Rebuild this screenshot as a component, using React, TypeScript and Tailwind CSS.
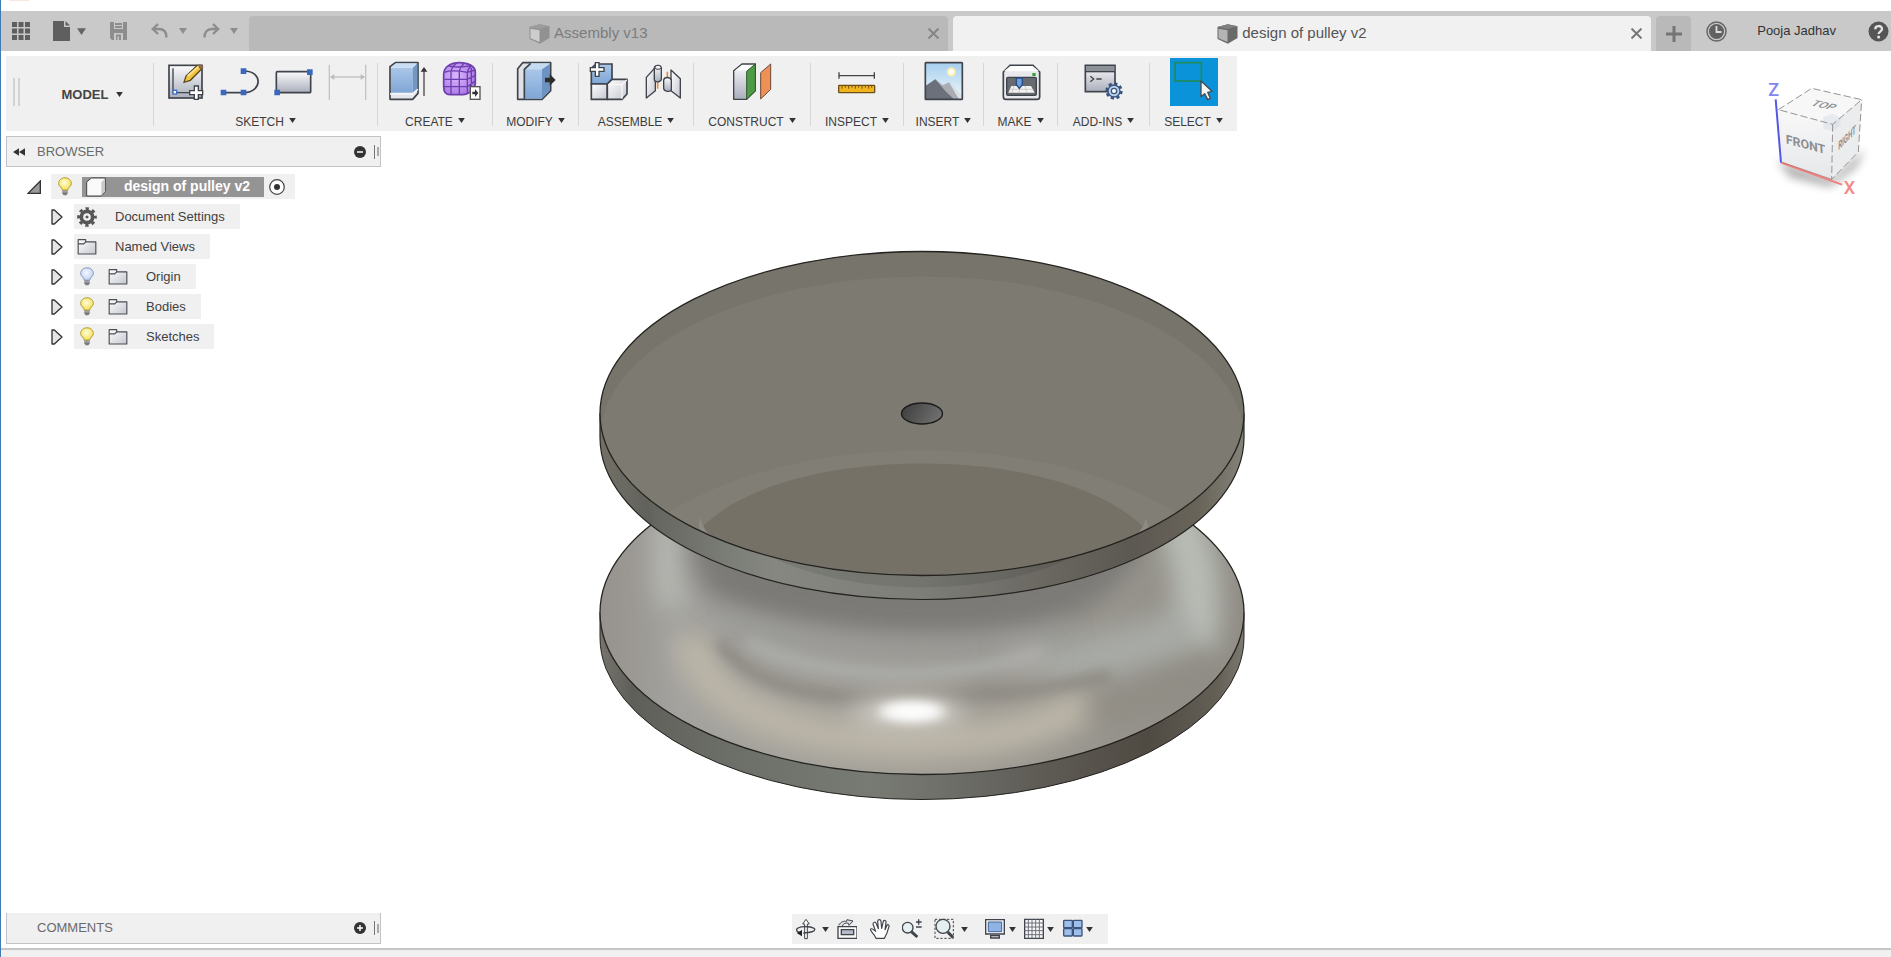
import type { ReactNode } from "react";

const INK = "#3f434b";

function Caret({ className = "w-[7px] h-[5px] fill-[#333]" }: { className?: string }) {
  return (
    <svg viewBox="0 0 8 6" className={className} aria-hidden="true">
      <path d="M0 0H8L4 6Z" />
    </svg>
  );
}

/* Gradients shared by every icon on the page. */
function SharedDefs() {
  return (
    <svg className="absolute size-0" aria-hidden="true">
      <defs>
        <linearGradient id="steel" x1="0" y1="0" x2="0" y2="1">
          <stop offset="0" stopColor="#fbfbfc" />
          <stop offset="1" stopColor="#a9aebb" />
        </linearGradient>
        <linearGradient id="steelSoft" x1="0" y1="0" x2="1" y2="1">
          <stop offset="0" stopColor="#ffffff" />
          <stop offset="1" stopColor="#c4c7cf" />
        </linearGradient>
        <linearGradient id="blue" x1="0" y1="0" x2="0" y2="1">
          <stop offset="0" stopColor="#a9c6e8" />
          <stop offset="1" stopColor="#7fa6d6" />
        </linearGradient>
        <linearGradient id="sky" x1="0" y1="0" x2="0" y2="1">
          <stop offset="0" stopColor="#a6cfee" />
          <stop offset="1" stopColor="#eef7fb" />
        </linearGradient>
        <radialGradient id="bulbOn" cx=".45" cy=".4" r=".6">
          <stop offset="0" stopColor="#fffde0" />
          <stop offset="1" stopColor="#f5df4d" />
        </radialGradient>
        <radialGradient id="bulbOff" cx=".45" cy=".4" r=".6">
          <stop offset="0" stopColor="#f4f8ff" />
          <stop offset="1" stopColor="#bfd2f5" />
        </radialGradient>
        <radialGradient id="purple" cx=".4" cy=".4" r=".7">
          <stop offset="0" stopColor="#d9b6fb" />
          <stop offset="1" stopColor="#a673e4" />
        </radialGradient>
      </defs>
    </svg>
  );
}

function ToolIcon({ x, children }: { x: number; children: ReactNode }) {
  return (
    <svg viewBox={`${x} 174 144 144`} className="size-12" fill="none" aria-hidden="true">
      {children}
    </svg>
  );
}

const icons = {
  sketch: (
    <ToolIcon x={483}>
      <rect x="507" y="196" width="99" height="98" fill="url(#steel)" stroke={INK} strokeWidth="5" />
      <path d="M519 205V278H580" stroke={INK} strokeWidth="4" />
      <rect x="519" y="271" width="11" height="11" fill="#fff" stroke="#3f6fc4" strokeWidth="4" />
      <path d="M552 247L558 228L592 196L605 207L571 241Z" fill="#f2c53a" stroke="#5d4a20" strokeWidth="4" />
      <path d="M563 228L596 199" stroke="#fbe69a" strokeWidth="5" />
      <path d="M592 196L605 207L611 201L600 192Z" fill="#8b6d4a" />
      <path d="M583 258H595V272H608V284H595V298H583V284H569V272H583Z" fill="#fff" stroke={INK} strokeWidth="4" />
    </ToolIcon>
  ),
  line: (
    <ToolIcon x={645}>
      <path d="M670 278H732C787 276 790 214 732 213" stroke={INK} strokeWidth="5" />
      <path d="M662 269H679V286H662ZM722 269H739V286H722ZM722 205H739V222H722Z" fill="#3b68bf" />
    </ToolIcon>
  ),
  rect: (
    <ToolIcon x={807}>
      <rect x="829" y="215" width="103" height="63" rx="3" fill="url(#steel)" stroke={INK} strokeWidth="5" />
      <path d="M921 208H938V225H921ZM823 269H840V286H823Z" fill="#3b68bf" />
    </ToolIcon>
  ),
  dimension: (
    <ToolIcon x={969}>
      <path d="M988 194V300M1097 194V300M992 231H1093" stroke="#c3c3c3" strokeWidth="4" />
      <path d="M990 231L1003 222V240ZM1095 231L1082 222V240Z" fill="#bdbdbd" />
    </ToolIcon>
  ),
  extrude: (
    <ToolIcon x={12}>
      <path d="M30 200L46 188H114V280L98 298H30Z" fill="#e3e5ea" stroke={INK} strokeWidth="5" strokeLinejoin="round" />
      <path d="M33 204H98V278H33Z" fill="url(#blue)" />
      <path d="M98 204L112 190V266L98 278Z" fill="#7197c6" />
      <path d="M34 203L48 190H111L98 203Z" fill="#c9def4" />
      <path d="M30 282H98L114 268" stroke="#f7f8fa" strokeWidth="4" />
      <path d="M132 288V210" stroke="#4a4a4a" strokeWidth="4" />
      <path d="M132 201L142 215H122Z" fill="#333" />
    </ToolIcon>
  ),
  form: (
    <ToolIcon x={174}>
      <path
        d="M191 222C192 200 212 188 238 188C266 188 286 200 286 216V250C284 268 268 284 248 284H210C196 284 191 274 191 260Z"
        fill="url(#purple)"
        stroke="#6d3fae"
        strokeWidth="5"
      />
      <path
        d="M193 217C210 211 240 213 262 217L286 210M193 238H262L286 226M192 260H262L285 244M213 284V214C214 204 222 196 230 189M238 284V214C240 204 246 196 252 190M262 280V217C264 206 270 200 276 196M206 198C226 202 252 202 274 196M274 268V204"
        stroke="#6d3fae"
        strokeWidth="4"
      />
      <rect x="271" y="260" width="29" height="38" fill="#fff" stroke="#555" strokeWidth="4" />
      <path d="M277 275H285V267L295 279L285 291V283H277Z" fill="#333" />
    </ToolIcon>
  ),
  pressPull: (
    <ToolIcon x={396}>
      <path d="M413 206L428 188H512V272L486 298H413Z" fill="#dfe1e6" stroke={INK} strokeWidth="5" strokeLinejoin="round" />
      <path d="M433 208H486V296H433Z" fill="url(#blue)" />
      <path d="M433 207L452 190H510L486 207Z" fill="#c3dbf3" />
      <path d="M486 208L510 191V271L486 296Z" fill="#6d93c3" />
      <path d="M433 297V208L452 190" stroke={INK} strokeWidth="5" />
      <path d="M495 233H509V222L527 240L509 257V247H495Z" fill="#2d2d2d" />
    </ToolIcon>
  ),
  component: (
    <ToolIcon x={615}>
      <path d="M634 205L648 192H696V238L682 252H634Z" fill="url(#blue)" stroke={INK} strokeWidth="5" />
      <path d="M634 252H682V298H634Z" fill="url(#steelSoft)" stroke={INK} strokeWidth="5" />
      <path d="M682 252L696 238H741V282L726 298H682Z" fill="url(#steelSoft)" stroke={INK} strokeWidth="5" strokeLinejoin="round" />
      <path d="M684 254H726V296M726 254L740 240" stroke="#f7f7f7" strokeWidth="4" />
      <path d="M646 188H657V203H672V214H657V229H646V214H631V203H646Z" fill="#fff" stroke={INK} strokeWidth="4" />
    </ToolIcon>
  ),
  joint: (
    <ToolIcon x={777}>
      <path d="M833 246V266M862 215V240" stroke="#ee8a3c" strokeWidth="5" />
      <path d="M799 232L826 202V272L817 280L799 294Z" fill="url(#steelSoft)" stroke={INK} strokeWidth="4" strokeLinejoin="round" />
      <path d="M823 204C825 194 842 194 844 204V238C842 247 825 248 823 240Z" fill="url(#steel)" stroke={INK} strokeWidth="4" />
      <ellipse cx="834" cy="202" rx="9" ry="6" fill="#f4f4f5" stroke={INK} strokeWidth="3" />
      <path d="M873 210L901 236V294L873 272Z" fill="url(#steelSoft)" stroke={INK} strokeWidth="4" strokeLinejoin="round" />
      <path d="M851 240C853 230 870 230 874 240V270C871 276 853 276 851 266Z" fill="url(#steel)" stroke={INK} strokeWidth="4" />
    </ToolIcon>
  ),
  plane: (
    <ToolIcon x={1044}>
      <path d="M1061 212L1086 192H1126V272L1100 298H1061Z" fill="url(#steel)" stroke={INK} strokeWidth="4" strokeLinejoin="round" />
      <path d="M1066 211L1087 195H1120L1099 211Z" fill="#fdfdfd" />
      <path d="M1100 214L1126 192V272L1100 298Z" fill="#4f9a45" stroke="#2f5a2c" strokeWidth="3" />
      <path d="M1142 218L1172 192V268L1142 297Z" fill="#ee9158" stroke="#6d4a38" strokeWidth="3" />
    </ToolIcon>
  ),
  measure: (
    <ToolIcon x={159}>
      <path d="M177 217V236M283 217V236M177 227H283" stroke="#444" strokeWidth="4" />
      <rect x="176" y="256" width="108" height="22" rx="2" fill="#f0b51e" stroke="#6d5018" strokeWidth="4" />
      <path d="M186 257V266M196 257V263M206 257V266M216 257V263M226 257V266M236 257V263M246 257V266M256 257V263M266 257V266M275 257V263" stroke="#6d5018" strokeWidth="3" />
    </ToolIcon>
  ),
  insert: (
    <ToolIcon x={418}>
      <rect x="434" y="188" width="111" height="110" fill="url(#sky)" />
      <circle cx="512" cy="216" r="14" fill="#f8ecae" />
      <circle cx="512" cy="216" r="8" fill="#fff" />
      <path d="M434 260L464 238L486 256L505 247L545 290V298H434Z" fill="#a9adb3" />
      <path d="M434 258L464 238L496 275L520 298H434Z" fill="#6b707a" />
      <path d="M505 247L545 290V298H535Z" fill="#dfe3e6" />
      <rect x="434" y="188" width="111" height="110" rx="2" stroke={INK} strokeWidth="5" />
    </ToolIcon>
  ),
  make: (
    <ToolIcon x={649}>
      <path d="M668 216L688 196H757L777 216V290Q777 298 769 298H676Q668 298 668 290Z" fill="#e8e9ec" stroke={INK} strokeWidth="5" />
      <path d="M670 214L689 198H756L775 214Z" fill="#fcfcfd" />
      <rect x="678" y="232" width="89" height="54" rx="4" fill="#676a70" stroke={INK} strokeWidth="4" />
      <path d="M692 258H751L762 278H683Z" fill="#f2f2f2" />
      <path d="M716 258V278M733 258L738 278M700 258L694 278M686 268H758" stroke="#b9b9b9" strokeWidth="2" />
      <path d="M707 234H725V254L716 265L707 254Z" fill="#6f9edb" stroke="#254c85" strokeWidth="4" />
      <rect x="755" y="219" width="10" height="9" fill="#38a336" />
    </ToolIcon>
  ),
  addins: (
    <ToolIcon x={898}>
      <rect x="914" y="196" width="89" height="79" fill="url(#steel)" stroke={INK} strokeWidth="5" />
      <path d="M916 198H1001V213H916Z" fill="#8c9097" />
      <path d="M914 215H1003" stroke={INK} strokeWidth="4" />
      <path d="M929 229L939 237L929 245M947 237H963" stroke="#444" strokeWidth="4" />
      <circle cx="1000" cy="273" r="21" stroke="#38557f" strokeWidth="10" strokeDasharray="9 7.5" />
      <circle cx="1000" cy="273" r="18" fill="#b9cfee" stroke="#38557f" strokeWidth="4" />
      <circle cx="1000" cy="273" r="8" fill="#fff" stroke="#38557f" strokeWidth="4" />
    </ToolIcon>
  ),
  select: (
    <ToolIcon x={1168}>
      <rect x="1183" y="188" width="79" height="55" stroke="#1f8a5b" strokeWidth="5" />
      <path d="M1261 243V290L1272 281L1281 299L1289 295L1281 277L1294 274Z" fill="#f7f7f7" stroke="#444b55" strokeWidth="4" strokeLinejoin="round" />
    </ToolIcon>
  ),
};

type Tool = { name: string; icon: ReactNode; active?: boolean };

function Group({ label, width, tools }: { label: string; width: string; tools: Tool[] }) {
  return (
    <section className={`flex shrink-0 flex-col items-center gap-2 ${width}`}>
      <div className="flex">
        {tools.map((t) => (
          <button
            key={t.name}
            aria-label={t.name}
            className={`flex justify-center ${t.active ? "w-12 bg-[#0a93d8]" : "w-[54px]"}`}
          >
            {t.icon}
          </button>
        ))}
      </div>
      <button className="flex items-center gap-[5px] text-[12px] leading-4">
        {label}
        <Caret className="mb-1 h-[5px] w-[7px] fill-[#333]" />
      </button>
    </section>
  );
}

function Divider() {
  return <div className="my-[5px] w-px shrink-0 bg-[#d6d6d6]" />;
}

function Toolbar() {
  return (
    <div role="toolbar" className="ml-[5px] flex h-[75px] w-fit bg-[#f0f0f0] pt-[2px] text-[#3c3c3c]">
      <div className="mt-5 ml-[7px] h-7 w-[7px] border-x-2 border-[#d2d2d2]" />
      <button className="flex w-[133px] items-center justify-center gap-2 pl-3 text-[13px] font-bold text-[#444]">
        MODEL
        <Caret />
      </button>
      <Divider />
      <Group
        label="SKETCH"
        width="w-[223px]"
        tools={[
          { name: "Create Sketch", icon: icons.sketch },
          { name: "Line", icon: icons.line },
          { name: "Rectangle", icon: icons.rect },
          { name: "Sketch Dimension", icon: icons.dimension },
        ]}
      />
      <Divider />
      <Group
        label="CREATE"
        width="w-[114px]"
        tools={[
          { name: "Extrude", icon: icons.extrude },
          { name: "Create Form", icon: icons.form },
        ]}
      />
      <Divider />
      <Group label="MODIFY" width="w-[85px]" tools={[{ name: "Press Pull", icon: icons.pressPull }]} />
      <Divider />
      <Group
        label="ASSEMBLE"
        width="w-[114px]"
        tools={[
          { name: "New Component", icon: icons.component },
          { name: "Joint", icon: icons.joint },
        ]}
      />
      <Divider />
      <Group label="CONSTRUCT" width="w-[116px]" tools={[{ name: "Offset Plane", icon: icons.plane }]} />
      <Divider />
      <Group label="INSPECT" width="w-[92px]" tools={[{ name: "Measure", icon: icons.measure }]} />
      <Divider />
      <Group label="INSERT" width="w-[79px]" tools={[{ name: "Insert Image", icon: icons.insert }]} />
      <Divider />
      <Group label="MAKE" width="w-[73px]" tools={[{ name: "3D Print", icon: icons.make }]} />
      <Divider />
      <Group label="ADD-INS" width="w-[91px]" tools={[{ name: "Scripts", icon: icons.addins }]} />
      <Divider />
      <Group label="SELECT" width="w-[87px]" tools={[{ name: "Select", icon: icons.select, active: true }]} />
    </div>
  );
}

function DocCube({ dim }: { dim?: boolean }) {
  return (
    <svg viewBox="0 0 62 60" className={`h-5 w-[21px] ${dim ? "opacity-50" : ""}`} aria-hidden="true">
      <path d="M1 9L32 1L61 7V42L32 59L1 45Z" fill="#6a6a6a" />
      <path d="M4 14L31 19V54L4 43Z" fill={dim ? "#e2e2e2" : "#b4b4b4"} />
      <path d="M1 9L32 1L61 7L32 15Z" fill="#808080" />
    </svg>
  );
}

function Tab({ title, active }: { title: string; active?: boolean }) {
  return (
    <div
      className={`flex flex-1 items-center rounded-t-[4px] pr-[9px] ${
        active ? "bg-[#f1f1f1] text-[#555]" : "bg-[#b9b9b9] text-[#7c7c7c]"
      }`}
    >
      <button role="tab" aria-selected={!!active} className="flex flex-1 items-center justify-center gap-1 text-[15px]">
        <DocCube dim={!active} />
        {title}
      </button>
      <button aria-label={`Close ${title}`}>
        <svg viewBox="0 0 10 10" className="size-[11px]" stroke={active ? "#777" : "#858585"} strokeWidth="1.8" aria-hidden="true">
          <path d="M.5 .5L9.5 9.5M9.5 .5L.5 9.5" />
        </svg>
      </button>
    </div>
  );
}

function TabBar() {
  return (
    <header className="flex h-10 bg-[#c9c9c9] pt-[5px]">
      <nav className="flex w-[248px] shrink-0 items-center pb-[5px] pl-[11px]">
        <button aria-label="Data panel" className="mr-[23px]">
          <svg viewBox="0 0 18 18" className="size-[18px] fill-[#5f5f5f]" aria-hidden="true">
            <path d="M0 0H5V5H0ZM6.500 0H11.500V5H6.500ZM13 0H18V5H13ZM0 6.500H5V11.500H0ZM6.500 6.500H11.500V11.500H6.500ZM13 6.500H18V11.500H13ZM0 13H5V18H0ZM6.500 13H11.500V18H6.500ZM13 13H18V18H13Z" />
          </svg>
        </button>
        <button aria-label="File" className="mr-6 flex items-center gap-[7px]">
          <svg viewBox="0 0 17 20" className="h-5 w-[17px] fill-[#5f5f5f]" aria-hidden="true">
            <path d="M0 0H11V6H17V20H0ZM12.500 0L17 4.500H12.500Z" />
          </svg>
          <Caret className="h-[7px] w-[9px] fill-[#666]" />
        </button>
        <button aria-label="Save" className="mr-6">
          <svg viewBox="0 0 17 18" className="h-[18px] w-[17px]" aria-hidden="true">
            <path d="M0 0H17V18H2L0 16Z" fill="#8d8d8d" />
            <path d="M4 0H13V7H4ZM4 11H13V18H4Z" fill="#c9c9c9" />
            <path d="M5 1H12V3H5ZM5 4H12V6H5ZM6 12.500H11V18H9V14.500H7.500V18H6Z" fill="#8d8d8d" />
          </svg>
        </button>
        <button aria-label="Undo" className="mr-4 flex items-center gap-[11px]">
          <svg viewBox="0 0 17 16" className="h-4 w-[17px]" fill="none" stroke="#8d8d8d" strokeWidth="2.4" aria-hidden="true">
            <path d="M7 1L1.800 6L7 11M2 6H8C13 6 15.500 9 15.500 14.500" />
          </svg>
          <Caret className="h-[6px] w-2 fill-[#8d8d8d]" />
        </button>
        <button aria-label="Redo" className="flex items-center gap-[10px]">
          <svg viewBox="0 0 17 16" className="h-4 w-[17px]" fill="none" stroke="#8d8d8d" strokeWidth="2.4" aria-hidden="true">
            <path d="M10 1L15.200 6L10 11M15 6H9C4 6 1.500 9 1.500 14.500" />
          </svg>
          <Caret className="h-[6px] w-2 fill-[#8d8d8d]" />
        </button>
      </nav>
      <div role="tablist" className="flex flex-1 gap-[5px]">
        <Tab title="Assembly v13" />
        <Tab title="design of pulley v2" active />
      </div>
      <button aria-label="New tab" className="ml-[5px] flex w-[35px] items-center justify-center rounded-t-[4px] bg-[#b9b9b9]">
        <svg viewBox="0 0 16 16" className="size-4" stroke="#757575" strokeWidth="3" aria-hidden="true">
          <path d="M8 0V16M0 8H16" />
        </svg>
      </button>
      <div className="flex shrink-0 items-center pr-[2px] pb-[5px] pl-[15px]">
        <button aria-label="Job status">
          <svg viewBox="0 0 21 21" className="size-[21px]" aria-hidden="true">
            <circle cx="10.500" cy="10.500" r="9.500" fill="none" stroke="#666" strokeWidth="1.500" />
            <circle cx="10.500" cy="10.500" r="7.500" fill="#616161" />
            <path d="M10.500 5V11H15.500" fill="none" stroke="#ddd" strokeWidth="1.800" />
          </svg>
        </button>
        <button className="mr-8 ml-[30px] text-[13px] text-[#333]">Pooja Jadhav</button>
        <button aria-label="Help">
          <svg viewBox="0 0 21 21" className="size-[21px]" aria-hidden="true">
            <circle cx="10.500" cy="10.500" r="10" fill="#555" />
            <path d="M7.200 8.200C7.200 4 14 4 14 8C14 10.500 10.600 10.600 10.600 13" fill="none" stroke="#e4e4e4" strokeWidth="2.300" />
            <circle cx="10.600" cy="16" r="1.500" fill="#e4e4e4" />
          </svg>
        </button>
      </div>
    </header>
  );
}

function Bulb({ on = true }: { on?: boolean }) {
  return (
    <svg viewBox="0 0 42 56" className="h-[19px] w-[14px]" aria-hidden="true">
      <path
        d="M21 2C9 2 2 10 2 19C2 28 12 30 13 39H29C30 30 40 28 40 19C40 10 33 2 21 2Z"
        fill={on ? "url(#bulbOn)" : "url(#bulbOff)"}
        stroke={on ? "#b09a2c" : "#8495b8"}
        strokeWidth="3"
      />
      <path d="M13 40H29V49L25 54H17L13 49Z" fill="#777b82" />
      <path d="M13 44H29" stroke="#d5d5d5" strokeWidth="2" />
    </svg>
  );
}

function Folder() {
  return (
    <svg viewBox="0 0 60 52" className="h-[17px] w-5" aria-hidden="true">
      <path d="M3 5H26V12H57V49H3Z" fill="url(#steelSoft)" stroke="#4a4d53" strokeWidth="3.500" strokeLinejoin="round" />
      <path d="M3 18H20L26 12" fill="none" stroke="#4a4d53" strokeWidth="3.500" />
    </svg>
  );
}

function Gear() {
  return (
    <svg viewBox="0 0 60 60" className="size-5" fill="none" stroke="#575757" aria-hidden="true">
      <circle cx="30" cy="30" r="25" strokeWidth="9" strokeDasharray="9.800 9.830" strokeDashoffset="4.900" />
      <circle cx="30" cy="30" r="17" strokeWidth="11" />
      <circle cx="30" cy="30" r="4" fill="#575757" />
    </svg>
  );
}

function PanelHeader({ title, collapsed }: { title: string; collapsed?: boolean }) {
  return (
    <div
      className={`flex h-[31px] items-center border border-[#c3c3c3] bg-[#f0f0f0] pr-1 pl-[6px] text-[13px] text-[#6a6a6a] ${
        collapsed ? "border-t-0" : ""
      }`}
    >
      <svg viewBox="0 0 13 8" className="mr-3 h-2 w-3 fill-[#333]" aria-hidden="true">
        {!collapsed && <path d="M6.500 0V8L0 4ZM13 0V8L6.500 4Z" />}
      </svg>
      <h2 className="flex-1">{title}</h2>
      <button aria-label={collapsed ? "Add comment" : "Collapse browser"} className="mr-2">
        <svg viewBox="0 0 12 12" className="size-3" aria-hidden="true">
          <circle cx="6" cy="6" r="6" fill="#333" />
          <path d={collapsed ? "M3 6H9M6 3V9" : "M3 6H9"} stroke="#fff" strokeWidth="1.500" />
        </svg>
      </button>
      <div className="mr-[-3px] flex items-center gap-[2px]">
        <div className="h-[14px] w-px bg-[#777]" />
        <div className="h-[9px] w-[2px] bg-[#aaa]" />
      </div>
    </div>
  );
}

function Expander() {
  return (
    <button aria-label="Expand" className="mr-[11px]">
      <svg viewBox="0 0 36 48" className="h-4 w-3" aria-hidden="true">
        <path d="M3 3H10L33 24L10 45H3Z" fill="#e6e6e6" stroke="#333" strokeWidth="4" strokeLinejoin="round" />
      </svg>
    </button>
  );
}

const treeRows: { name: string; bulb?: "on" | "off"; icon: ReactNode }[] = [
  { name: "Document Settings", icon: <Gear /> },
  { name: "Named Views", icon: <Folder /> },
  { name: "Origin", bulb: "off", icon: <Folder /> },
  { name: "Bodies", bulb: "on", icon: <Folder /> },
  { name: "Sketches", bulb: "on", icon: <Folder /> },
];

function Browser() {
  return (
    <aside className="mt-[5px] ml-[5px] w-[375px]">
      <PanelHeader title="BROWSER" />
      <ul className="mt-[7px] flex flex-col gap-[5px] text-[13px] text-[#3f3f3f]">
        <li className="flex h-[25px] items-center pl-[21px]">
          <button aria-label="Collapse" className="mr-[10px]">
            <svg viewBox="0 0 42 42" className="size-[14px]" aria-hidden="true">
              <path d="M40 3V40H3Z" fill="#9a9a9a" stroke="#333" strokeWidth="4" />
            </svg>
          </button>
          <div className="flex h-[25px] items-center gap-[10px] bg-[#f0f0f0] pr-[10px] pl-[7px]">
            <Bulb />
            <div className="flex h-5 items-center bg-[#949494] pr-[14px] pl-1 text-[14px] font-bold text-white">
              <svg viewBox="0 0 60 58" className="mr-[18px] h-5 w-5" aria-hidden="true">
                <path d="M2 14L16 2H58V42L46 56H2Z" fill="#fafafa" stroke="#444" strokeWidth="3" strokeLinejoin="round" />
                <path d="M46 15L57 4V42L46 55Z" fill="#c9c9c9" />
              </svg>
              design of pulley v2
            </div>
            <button aria-label="Activate component" className="-ml-[5px]">
              <svg viewBox="0 0 16 16" className="size-4" aria-hidden="true">
                <circle cx="8" cy="8" r="7.300" fill="#fff" stroke="#444" strokeWidth="1.200" />
                <circle cx="8" cy="8" r="3" fill="#333" />
              </svg>
            </button>
          </div>
        </li>
        {treeRows.map((row) => (
          <li key={row.name} className="flex h-[25px] items-center pl-[45px]">
            <Expander />
            <div
              className={`flex h-[25px] items-center bg-[#f0f0f0] pr-[15px] ${row.bulb ? "pl-[6px]" : "pl-[3px]"}`}
            >
              {row.bulb && (
                <span className="mr-[14px]">
                  <Bulb on={row.bulb === "on"} />
                </span>
              )}
              {row.icon}
              <span className="ml-[18px]">{row.name}</span>
            </div>
          </li>
        ))}
      </ul>
    </aside>
  );
}

function Pulley() {
  return (
    <svg
      viewBox="0 0 1890 896"
      preserveAspectRatio="xMidYMid meet"
      className="col-start-1 row-start-1 size-full min-h-0"
      role="img"
      aria-label="Pulley model"
    >
      <defs>
        <linearGradient id="rimTop" gradientUnits="userSpaceOnUse" x1="600" y1="0" x2="1244" y2="0">
          <stop offset="0" stopColor="#78766c" />
          <stop offset=".08" stopColor="#65655f" />
          <stop offset=".2" stopColor="#7b7d77" />
          <stop offset=".27" stopColor="#858780" />
          <stop offset=".5" stopColor="#7c7e77" />
          <stop offset=".68" stopColor="#6c6963" />
          <stop offset=".82" stopColor="#5c5852" />
          <stop offset=".93" stopColor="#686459" />
          <stop offset="1" stopColor="#85827a" />
        </linearGradient>
        <linearGradient id="rimLow" gradientUnits="userSpaceOnUse" x1="600" y1="0" x2="1244" y2="0">
          <stop offset="0" stopColor="#76746c" />
          <stop offset=".05" stopColor="#5f5f59" />
          <stop offset=".2" stopColor="#6c6e68" />
          <stop offset=".42" stopColor="#787a74" />
          <stop offset=".52" stopColor="#70716b" />
          <stop offset=".68" stopColor="#5f5c56" />
          <stop offset=".85" stopColor="#4f4a42" />
          <stop offset=".96" stopColor="#656056" />
          <stop offset="1" stopColor="#7c7970" />
        </linearGradient>
        <linearGradient id="surface" gradientUnits="userSpaceOnUse" x1="600" y1="0" x2="1244" y2="0">
          <stop offset="0" stopColor="#96928d" />
          <stop offset=".12" stopColor="#a3a29e" />
          <stop offset=".5" stopColor="#a09d96" />
          <stop offset=".85" stopColor="#96938c" />
          <stop offset="1" stopColor="#8f8c85" />
        </linearGradient>
        <linearGradient id="holeFill" x1="0" y1="0" x2="1" y2=".3">
          <stop offset="0" stopColor="#3c3c3b" />
          <stop offset="1" stopColor="#6c6d6c" />
        </linearGradient>
        <clipPath id="lowerFace">
          <ellipse cx="922" cy="612" rx="322" ry="162" />
        </clipPath>
        <clipPath id="topFace">
          <ellipse cx="922" cy="413" rx="322" ry="162" />
        </clipPath>
        <clipPath id="topRim">
          <path d="M600 413V437A322 162 0 0 0 1244 437V413A322 162 0 0 1 600 413Z" />
        </clipPath>
        <filter id="b6" filterUnits="userSpaceOnUse" x="540" y="400" width="760" height="440">
          <feGaussianBlur stdDeviation="6" />
        </filter>
        <filter id="b12" filterUnits="userSpaceOnUse" x="540" y="400" width="760" height="440">
          <feGaussianBlur stdDeviation="12" />
        </filter>
      </defs>
      <g transform="translate(-1 -51)">
        <path d="M600 612V637A322 162 0 0 0 1244 637V612Z" fill="url(#rimLow)" stroke="#24231f" strokeWidth="1" />
        <ellipse cx="922" cy="612" rx="322" ry="162" fill="url(#surface)" />
        <g clipPath="url(#lowerFace)" fill="none">
          <path d="M678 490C664 540 664 580 674 606" stroke="#b7bab4" strokeWidth="24" filter="url(#b12)" />
          <path d="M1165 490C1192 540 1206 590 1192 650" stroke="#b7bcb5" strokeWidth="46" filter="url(#b12)" />
          <path d="M1190 630C1130 650 1090 660 1040 668" stroke="#a8aaa6" strokeWidth="46" filter="url(#b12)" />
          <path d="M690 635C700 705 790 740 905 742C1000 742 1050 726 1090 700" stroke="#bcb6a8" strokeWidth="36" filter="url(#b12)" />
          <path d="M720 640C745 686 820 700 905 698C960 697 1040 690 1110 676" stroke="#8d8982" strokeWidth="13" opacity=".9" filter="url(#b6)" />
          <path d="M1090 712C1140 705 1190 680 1215 655" stroke="#908c84" strokeWidth="34" opacity=".8" filter="url(#b12)" />
          <path d="M696 490C680 560 696 606 756 616C840 640 960 646 1040 626C1110 604 1148 570 1152 490Z" fill="#7b7a77" filter="url(#b12)" />
          <path d="M715 612C780 640 850 650 960 648C1000 646 1040 640 1070 632" stroke="#9b9c9a" strokeWidth="20" opacity=".85" filter="url(#b12)" />
          <path d="M748 642C800 668 860 676 930 672C980 669 1020 660 1044 650" stroke="#acadab" strokeWidth="11" filter="url(#b6)" />
          <ellipse cx="1026" cy="660" rx="22" ry="12" fill="#adaca8" filter="url(#b12)" />
          <ellipse cx="908" cy="711" rx="58" ry="13" fill="#d8d4ce" filter="url(#b12)" />
          <ellipse cx="912" cy="711" rx="34" ry="9" fill="#fff" filter="url(#b6)" />
          <ellipse cx="912" cy="711" rx="22" ry="5" fill="#fff" filter="url(#b6)" />
        </g>
        <ellipse cx="922" cy="612" rx="322" ry="162" fill="none" stroke="#24231f" strokeWidth="1.300" />

        <path d="M600 413V437A322 162 0 0 0 1244 437V413Z" fill="url(#rimTop)" />
        <g clipPath="url(#topRim)">
          <ellipse cx="922" cy="476" rx="220" ry="111" fill="#000" opacity=".08" />
          <path d="M590 400H672C640 490 650 520 655 530L600 500Z" fill="#000" opacity=".04" />
        </g>
        <path d="M600 413V437A322 162 0 0 0 1244 437V413" fill="none" stroke="#24231f" strokeWidth="1.200" />
        <ellipse cx="922" cy="413" rx="322" ry="162" fill="#77746b" />
        <g clipPath="url(#topFace)">
          <ellipse cx="922" cy="438" rx="322" ry="162" fill="#7d7a72" />
          <ellipse cx="922" cy="612" rx="322" ry="162" fill="#817e76" />
          <path d="M702 527C740 488 822 463 922 463C1022 463 1104 488 1144 527L1120 560L922 600L724 545Z" fill="#757167" />
          <path d="M700 515C701 522 704 529 711 537C703 532 699 529 699 526ZM1146 517C1145 522 1142 529 1136 535C1142 531 1147 529 1148 526Z" fill="#8f8b82" />
        </g>
        <ellipse cx="922" cy="413" rx="322" ry="162" fill="none" stroke="#24231f" strokeWidth="1.300" />
        <ellipse cx="922" cy="413" rx="20.500" ry="10.500" fill="url(#holeFill)" stroke="#1c1c1b" strokeWidth="1.400" />
      </g>
    </svg>
  );
}

function ViewCube() {
  return (
    <svg
      viewBox="630 230 351 372"
      className="col-start-1 row-start-1 mt-[26px] mr-[14px] h-[124px] w-[117px] self-start justify-self-end font-['Roboto',sans-serif]"
      role="img"
      aria-label="View cube"
    >
      <defs>
        <filter id="cubeShadow" x="-30%" y="-30%" width="160%" height="160%">
          <feGaussianBlur stdDeviation="14" />
        </filter>
        <linearGradient id="cubeFront" x1="0" y1="0" x2="0" y2="1">
          <stop offset="0" stopColor="#f8f8f9" />
          <stop offset="1" stopColor="#e6e7e9" />
        </linearGradient>
      </defs>
      <path d="M680 480L845 535L945 445L920 500L840 560L720 530Z" fill="#000" opacity=".32" filter="url(#cubeShadow)" />
      <path d="M685 328L785 264L935 298L848 372Z" fill="#f7f7f8" />
      <path d="M685 328L848 372L845 537L694 485Z" fill="url(#cubeFront)" />
      <path d="M848 372L935 298L925 455L845 537Z" fill="#ebecee" />
      <path d="M820 350L848 340L872 352V375L848 392L820 385Z" fill="#cfd6e4" opacity=".4" />
      <path d="M685 328L785 264L935 298L848 372ZM848 372L845 537L925 455L935 298" fill="none" stroke="#949494" strokeWidth="3" strokeDasharray="22 9" />
      <path d="M677 297L693 487" stroke="#5757e6" strokeWidth="6" />
      <path d="M693 487L876 553" stroke="#f37d7d" strokeWidth="6" />
      <path d="M694 485L845 537" stroke="#a06a6a" strokeWidth="2" />
      <g fill="#8b8d91" textAnchor="middle" className="font-bold">
        <text transform="matrix(1 .27 .04 1 767 445)" fontSize="37">FRONT</text>
        <text transform="matrix(1 .22 -.75 .62 813 322)" fontSize="35" className="font-medium">TOP</text>
        <text transform="matrix(.5 -.5 -.02 1 891 424)" fontSize="36">RIGHT</text>
      </g>
      <text x="671" y="288" textAnchor="middle" fontSize="54" fill="#8585f2" className="font-medium">Z</text>
      <text x="898" y="581" textAnchor="middle" fontSize="54" fill="#f58888" className="font-medium">X</text>
    </svg>
  );
}

function NavIcon({ name, x, children, menu, className = "" }: { name: string; x: number; children: ReactNode; menu?: string; className?: string }) {
  return (
    <button aria-label={name} className={`flex items-center ${className} ${menu ?? ""}`}>
      <svg viewBox={`${x} 66 60 66`} className="h-[22px] w-5" fill="none" stroke={INK} strokeWidth="4" aria-hidden="true">
        {children}
      </svg>
      {menu && <Caret />}
    </button>
  );
}

function NavBar() {
  return (
    <div role="toolbar" aria-label="Navigation" className="flex h-[30px] bg-[#f0f0f0] pr-[15px] pl-1">
      <NavIcon name="Orbit" x={78} menu="gap-[6px]" className="mr-2">
        <path d="M104 128V84H98L108 70L118 84H112V128Z" fill="#fff" strokeWidth="3" />
        <path d="M92 111C80 109 76 101 84 96C98 89 130 92 134 99C136 106 122 110 100 111" />
        <path d="M96 102L80 111L96 121Z" fill="#222" stroke="none" />
      </NavIcon>
      <NavIcon name="Look at" x={200} className="mr-[13px]">
        <path d="M203 92H260V127H203Z" fill="#fafafa" />
        <path d="M213 101H250V116H213Z" fill="#b5bac4" />
        <path d="M205 88C212 76 222 74 228 77L230 71L248 75L236 88L234 82C226 80 220 82 216 90" strokeWidth="3" fill="#ddd" />
      </NavIcon>
      <NavIcon name="Pan" x={300} className="mr-3">
        <path
          d="M318 127C312 112 298 104 302 99C307 95 314 104 317 106L309 84C309 77 317 77 319 83L325 98L323 76C324 69 332 69 333 76L335 97L340 76C342 71 349 73 348 80L345 101L351 88C353 84 358 86 357 91C353 108 350 116 343 127Z"
          fill="#fff"
          strokeWidth="3.500"
          strokeLinejoin="round"
        />
      </NavIcon>
      <NavIcon name="Zoom" x={396} className="mr-3">
        <circle cx="413" cy="95" r="16" fill="#e7f1f3" />
        <path d="M424 107L442 123" strokeWidth="9" />
        <path d="M446 70V86M438 78H455M438 93H455" />
      </NavIcon>
      <NavIcon name="Zoom window" x={492} menu="gap-[7px]" className="mr-[17px]">
        <path d="M495 70H550V127H495Z" strokeDasharray="7 5" strokeWidth="3" />
        <circle cx="519" cy="91" r="21" fill="#e4f0ef" />
        <path d="M533 108L549 124" strokeWidth="9" />
      </NavIcon>
      <NavIcon name="Display settings" x={647} menu="gap-1" className="mr-2">
        <path d="M649 71H705V114H649Z" fill="#f6f6f6" />
        <path d="M657 78H697V107H657Z" fill="#8fb4e4" stroke="#42669c" strokeWidth="3" />
        <path d="M664 126V119H690V126Z" fill="#ddd" />
      </NavIcon>
      <NavIcon name="Grid settings" x={763} menu="gap-[3px]" className="mr-[9px]">
        <path d="M765 70H821V127H765Z" fill="#f8f8fa" />
        <path d="M776 70V127M787 70V127M798 70V127M809 70V127M765 81H821M765 93H821M765 104H821M765 116H821" strokeWidth="3" stroke="#6d7078" />
      </NavIcon>
      <NavIcon name="Viewports" x={878} menu="gap-[3px]">
        <g fill="#9dbfea" stroke="#3d557c" strokeWidth="4">
          <rect x="880" y="73" width="26" height="22" rx="2" />
          <rect x="909" y="73" width="26" height="22" rx="2" />
          <rect x="880" y="98" width="26" height="22" rx="2" />
          <rect x="909" y="98" width="26" height="22" rx="2" />
        </g>
      </NavIcon>
    </div>
  );
}

export default function App() {
  return (
    <div className="flex h-screen min-h-[640px] flex-col overflow-hidden border-l border-[#3f7ab0] bg-white font-['Liberation_Sans',Arial,sans-serif]">
      <SharedDefs />
      <div className="h-[11px] shrink-0">
        <div className="ml-2 h-px w-5 bg-[#f8e6e1]" />
      </div>
      <TabBar />
      <main className="grid min-h-0 flex-1 grid-cols-1 grid-rows-1">
        <Pulley />
        <ViewCube />
        <div className="col-start-1 row-start-1 flex min-h-0 flex-col pt-[5px]">
          <Toolbar />
          <Browser />
          <div className="mt-auto mb-1 flex items-end">
            <section className="ml-[5px] w-[375px] shrink-0">
              <PanelHeader title="COMMENTS" collapsed />
            </section>
            <div className="flex flex-1 justify-center pr-[373px]">
              <NavBar />
            </div>
          </div>
        </div>
      </main>
      <footer className="h-[9px] shrink-0 border-t-2 border-[#c6c6c6] bg-[#f0f0f0]" />
    </div>
  );
}
